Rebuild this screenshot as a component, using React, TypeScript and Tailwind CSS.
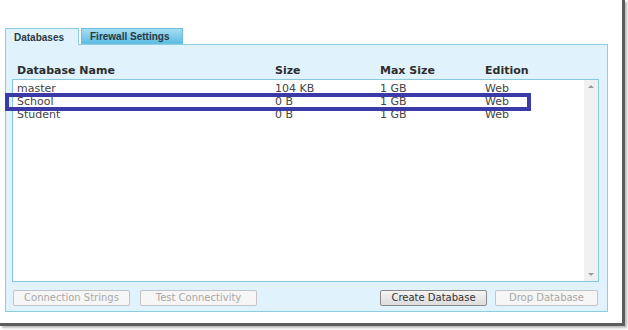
const rows = [
  { name: "master", size: "104 KB", max: "1 GB", edition: "Web" },
  { name: "School", size: "0 B", max: "1 GB", edition: "Web" },
  { name: "Student", size: "0 B", max: "1 GB", edition: "Web" },
];

const verdana = "font-['DejaVu_Sans','Verdana',sans-serif]";

const Btn = ({ label, active, w }: { label: string; active?: boolean; w: string }) => (
  <div
    className={`${w} h-[16px] flex items-center justify-center rounded-[2px] border text-[10px] leading-none ${verdana} ${
      active
        ? "border-[#8a8a8a] bg-gradient-to-b from-[#f4f4f4] to-[#dcdcdc] text-[#333]"
        : "border-[#c4c4c4] bg-[#f6f6f6] text-[#a8a8a8]"
    }`}
  >
    {label}
  </div>
);

export default function App() {
  return (
    <div className="w-[628px] h-[330px] bg-white relative overflow-hidden">
      <div className="w-[625px] h-[326px] border-r-[3px] border-b-[3px] border-[#5c5c5c] shadow-[2px_2px_2px_#bbb] pt-[27px] pl-[5px]">
        {/* tabs */}
        <div className="flex items-end h-[17px] font-['Liberation_Sans',Arial,sans-serif] font-bold text-[10px] text-[#2b3a44]">
          <div className="w-[74px] h-[17px] bg-[#e0f2fb] border border-b-0 border-[#8ccde3] flex items-center pl-[8px] relative z-10 top-[1px]">
            Databases
          </div>
          <div className="ml-[2px] w-[102px] h-[16px] bg-gradient-to-b from-[#a6ddf2] to-[#5cbde4] border border-[#6bbfdd] flex items-center pl-[8px]">
            Firewall Settings
          </div>
        </div>

        {/* panel */}
        <div className="w-[603px] h-[268px] bg-[#e0f2fb] border border-[#8ccde3] pt-[19px] px-[6px]">
          <div className={`grid grid-cols-[258px_105px_105px_1fr] pl-[5px] text-[11px] leading-[13px] font-bold text-[#2d2d2d] ${verdana}`}>
            <div>Database Name</div>
            <div>Size</div>
            <div>Max Size</div>
            <div>Edition</div>
          </div>

          {/* list box */}
          <div className="mt-[2px] w-[587px] h-[203px] bg-white border border-[#86c8de] flex">
            <div className={`flex-1 pt-[2px] pl-[4px] text-[11px] leading-[13px] text-[#444] ${verdana}`}>
              {rows.map((r) => (
                <div key={r.name} className="grid grid-cols-[258px_105px_105px_1fr]">
                  <div>{r.name}</div>
                  <div>{r.size}</div>
                  <div>{r.max}</div>
                  <div>{r.edition}</div>
                </div>
              ))}
            </div>
            <div className="w-[14px] bg-[#f0f0f0] flex flex-col items-center justify-between py-[5px]">
              <div className="w-0 h-0 border-l-[3px] border-r-[3px] border-b-[3px] border-l-transparent border-r-transparent border-b-[#9a9a9a]" />
              <div className="w-0 h-0 border-l-[3px] border-r-[3px] border-t-[3px] border-l-transparent border-r-transparent border-t-[#9a9a9a]" />
            </div>
          </div>

          {/* buttons */}
          <div className="mt-[8px] flex items-center pl-[1px]">
            <Btn label="Connection Strings" w="w-[117px]" />
            <div className="ml-[10px]">
              <Btn label="Test Connectivity" w="w-[117px]" />
            </div>
            <div className="ml-auto flex gap-[8px] pr-[3px]">
              <Btn label="Create Database" active w="w-[107px]" />
              <Btn label="Drop Database" w="w-[103px]" />
            </div>
          </div>
        </div>
      </div>

      {/* highlight box */}
      <div className="absolute left-[5px] top-[93px] w-[526px] h-[18px] border-[4px] border-[#3a3aa8]" />
    </div>
  );
}
